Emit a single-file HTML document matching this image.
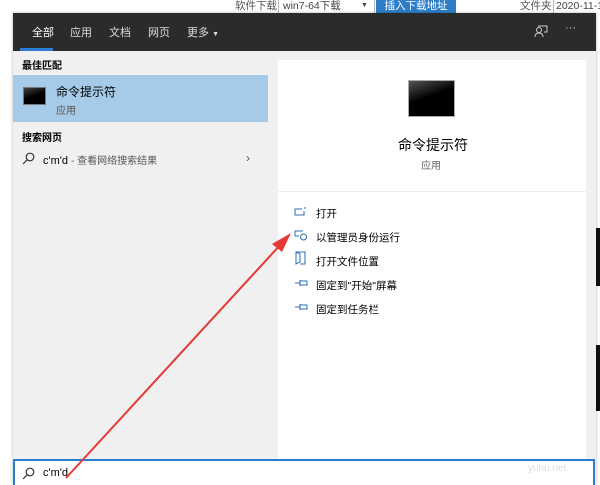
<!DOCTYPE html>
<html><head><meta charset="utf-8"><style>
*{margin:0;padding:0;box-sizing:border-box}
body{width:600px;height:485px;overflow:hidden;background:#fff;position:relative;font-family:"Liberation Sans","Noto Sans CJK SC",sans-serif;color:#000}
.a{position:absolute}
.t{font-size:11px;white-space:nowrap}
</style></head><body>
<!-- top toolbar strip -->
<div class="a" style="left:0;top:0;width:600px;height:13px;background:#fff"></div>
<div class="a t" style="left:235px;top:0;color:#555;font-size:10.5px;line-height:13px">软件下载</div>
<div class="a" style="left:278px;top:0;width:97px;height:13px;border-left:1px solid #bbb;border-right:1px solid #bbb"></div>
<div class="a t" style="left:283px;top:0;color:#444;font-size:10.5px;line-height:13px">win7-64下载</div>
<div class="a t" style="left:361px;top:0;color:#444;font-size:7px;line-height:11px">▼</div>
<div class="a t" style="left:376px;top:0;width:80px;height:13px;background:#2d7ec8;color:#fff;font-size:10.5px;line-height:13px;text-align:center">插入下载地址</div>
<div class="a t" style="left:520px;top:0;color:#555;font-size:10.5px;line-height:13px">文件夹</div>
<div class="a t" style="left:553px;top:0;color:#444;font-size:10.5px;line-height:13px;border-left:1px solid #bbb;padding-left:2px">2020-11-1</div>
<!-- right strip -->
<div class="a" style="left:596px;top:228px;width:4px;height:58px;background:#111"></div>
<div class="a" style="left:596px;top:345px;width:4px;height:66px;background:#111"></div>
<!-- window -->
<div class="a" style="left:13px;top:13px;width:583px;height:472px;background:#f0f0f0;box-shadow:0 0 3px rgba(0,0,0,.3)"></div>
<div class="a" style="left:13px;top:13px;width:583px;height:38px;background:#2b2b2b"></div>
<div class="a t" style="left:32px;top:24px;color:#fff;font-size:11px">全部</div>
<div class="a" style="left:20px;top:48px;width:33px;height:3px;background:#2b7cd3"></div>
<div class="a t" style="left:70px;top:24px;color:#ddd">应用</div>
<div class="a t" style="left:109px;top:24px;color:#ddd">文档</div>
<div class="a t" style="left:148px;top:24px;color:#ddd">网页</div>
<div class="a t" style="left:187px;top:24px;color:#ddd">更多 <span style="font-size:7px">▼</span></div>
<svg class="a" style="left:533px;top:23px" width="16" height="16" viewBox="0 0 16 16" fill="none" stroke="#ccc" stroke-width="1"><circle cx="6" cy="7" r="2.5"/><path d="M2 14c0-3 2-4 4-4s4 1 4 4M5 3h9v6h-3"/></svg>
<div class="a t" style="left:565px;top:22px;color:#ccc">···</div>
<!-- left pane -->
<div class="a t" style="left:22px;top:57px;font-weight:bold;font-size:10px">最佳匹配</div>
<div class="a" style="left:13px;top:75px;width:255px;height:47px;background:#a6cbe8"></div>
<div class="a" style="left:23px;top:87px;width:23px;height:18px;background:linear-gradient(160deg,#444,#000 50%);border:1px solid #777"></div>
<div class="a t" style="left:56px;top:83px;font-size:12px">命令提示符</div>
<div class="a t" style="left:56px;top:102px;color:#555;font-size:10px">应用</div>
<div class="a t" style="left:22px;top:129px;font-weight:bold;font-size:10px">搜索网页</div>
<svg class="a" style="left:22px;top:152px" width="13" height="13" viewBox="0 0 13 13" fill="none" stroke="#333" stroke-width="1.2"><circle cx="8" cy="5" r="3.8"/><path d="M5.3 7.7L1 12"/></svg>
<div class="a t" style="left:43px;top:152px;font-size:11px">c'm'd <span style="color:#555;font-size:10px">- 查看网络搜索结果</span></div>
<div class="a t" style="left:246px;top:151px;color:#555;font-size:12px">›</div>
<!-- right pane card -->
<div class="a" style="left:278px;top:60px;width:308px;height:400px;background:#fff"></div>
<div class="a" style="left:278px;top:191px;width:308px;height:1px;background:#eee"></div>
<div class="a" style="left:408px;top:80px;width:47px;height:37px;background:linear-gradient(160deg,#555,#000 45%);border:1px solid #aaa"></div>
<div class="a t" style="left:398px;top:135px;font-size:14px">命令提示符</div>
<div class="a t" style="left:421px;top:157px;color:#666;font-size:10px">应用</div>
<!-- actions -->
<svg class="a" style="left:294px;top:206px" width="14" height="12" viewBox="0 0 14 12" fill="none" stroke="#2b6cb0" stroke-width="1"><path d="M8 3H1v6h9V5M11 1v2"/></svg>
<div class="a t" style="left:316px;top:206px;font-size:10.5px">打开</div>
<svg class="a" style="left:294px;top:229px" width="14" height="12" viewBox="0 0 14 12" fill="none" stroke="#2b6cb0" stroke-width="1"><path d="M1 2h8M1 2v5h4"/><circle cx="9.5" cy="8" r="3"/></svg>
<div class="a t" style="left:316px;top:230px;font-size:10.5px">以管理员身份运行</div>
<svg class="a" style="left:295px;top:251px" width="12" height="14" viewBox="0 0 12 14" fill="none" stroke="#2b6cb0" stroke-width="1"><path d="M1 1h9v12H5M1 1v12l4-2V3z"/></svg>
<div class="a t" style="left:316px;top:254px;font-size:10.5px">打开文件位置</div>
<svg class="a" style="left:294px;top:277px" width="14" height="12" viewBox="0 0 14 12" fill="none" stroke="#2b6cb0" stroke-width="1"><path d="M1 6h5M6 3v6M6 4h7v4H6"/></svg>
<div class="a t" style="left:316px;top:278px;font-size:10.5px">固定到"开始"屏幕</div>
<svg class="a" style="left:294px;top:301px" width="14" height="12" viewBox="0 0 14 12" fill="none" stroke="#2b6cb0" stroke-width="1"><path d="M1 6h5M6 3v6M6 4h7v4H6"/></svg>
<div class="a t" style="left:316px;top:302px;font-size:10.5px">固定到任务栏</div>
<!-- search box -->
<div class="a" style="left:13px;top:459px;width:582px;height:26px;background:#fff;border:2px solid #2b7cd3;border-bottom:none"></div>
<svg class="a" style="left:22px;top:467px" width="13" height="13" viewBox="0 0 13 13" fill="none" stroke="#333" stroke-width="1.2"><circle cx="8" cy="5" r="3.8"/><path d="M5.3 7.7L1 12"/></svg>
<div class="a t" style="left:43px;top:467px;font-size:11px">c'm'd</div>
<div class="a t" style="left:528px;top:463px;color:#ddd;font-size:10px">yuhu.net</div>
<!-- arrow -->
<svg class="a" style="left:0;top:0" width="600" height="485"><line x1="66" y1="478" x2="282" y2="243" stroke="#e53935" stroke-width="2"/><polygon points="291,233 272,244 282,252" fill="#e53935"/></svg>
</body></html>
